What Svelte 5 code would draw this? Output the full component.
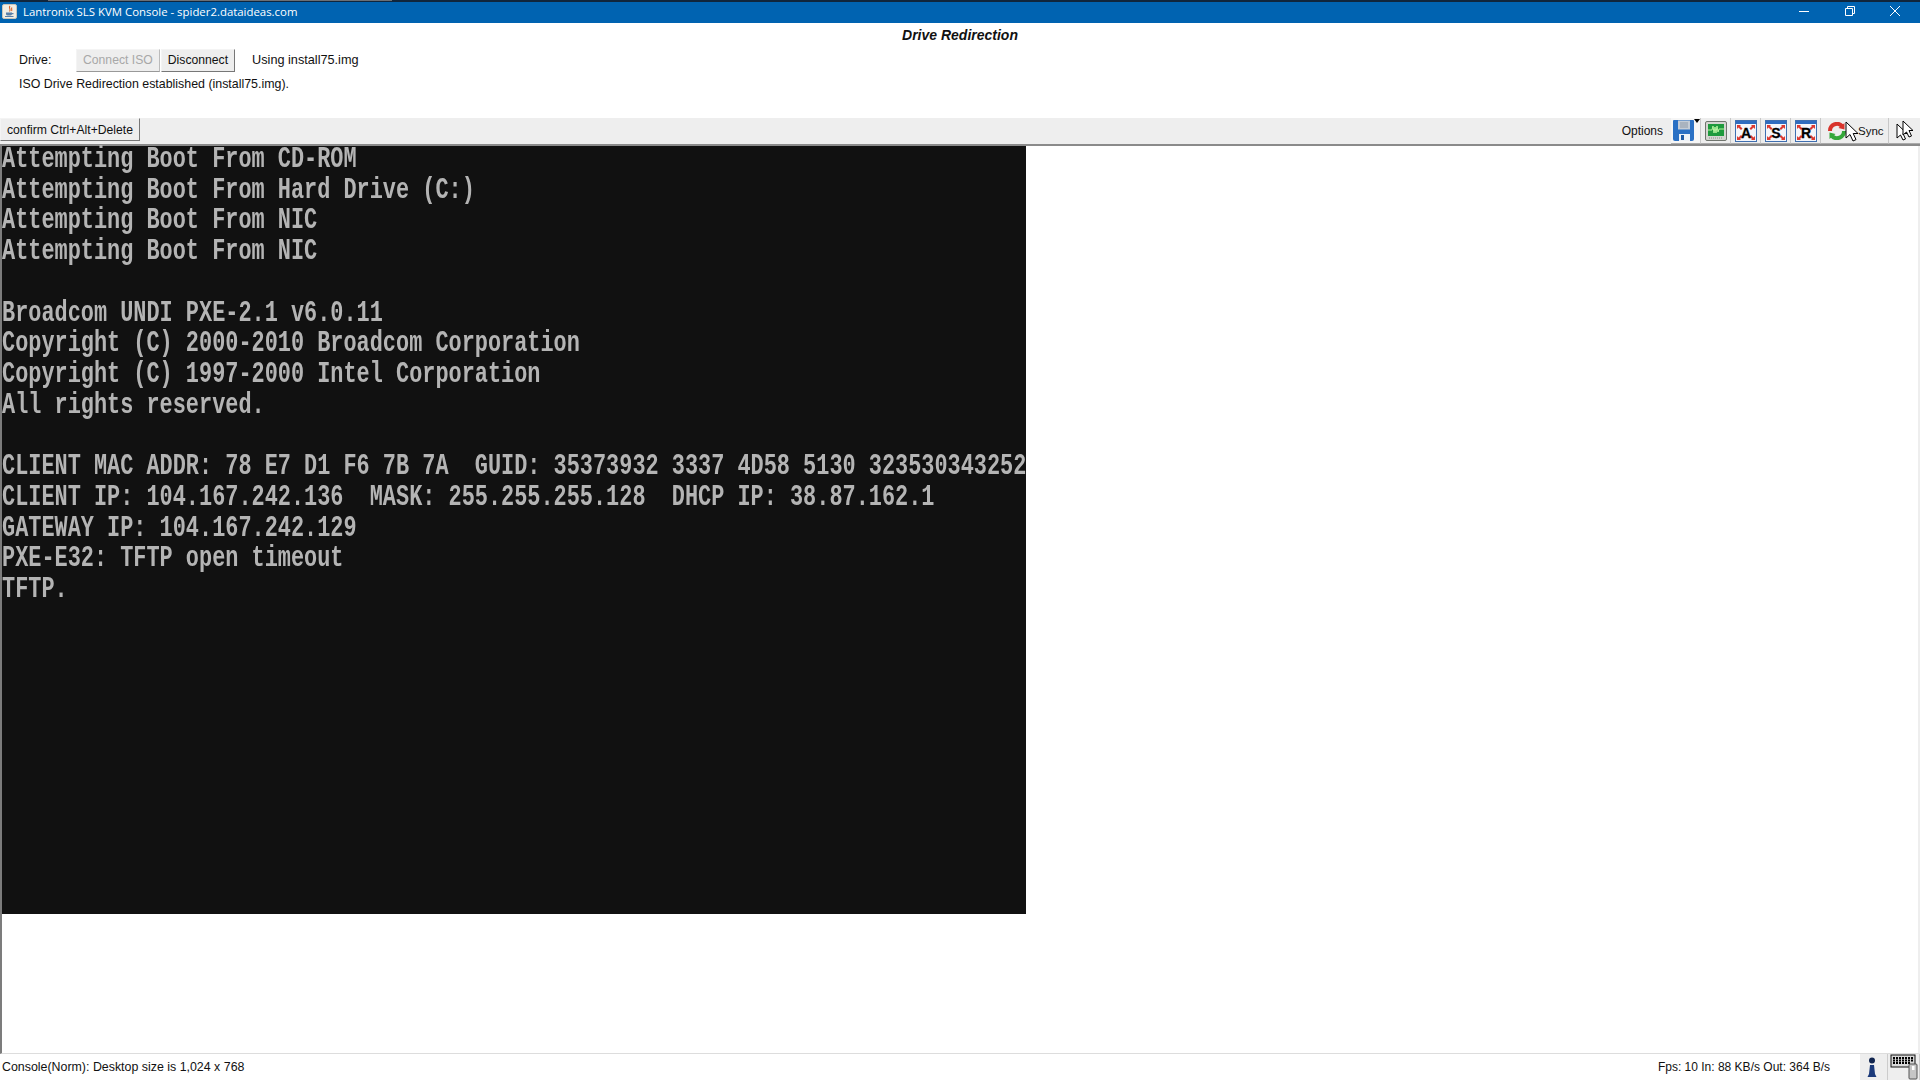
<script>
  const lines = [
    'Attempting Boot From CD-ROM',
    'Attempting Boot From Hard Drive (C:)',
    'Attempting Boot From NIC',
    'Attempting Boot From NIC',
    '',
    'Broadcom UNDI PXE-2.1 v6.0.11',
    'Copyright (C) 2000-2010 Broadcom Corporation',
    'Copyright (C) 1997-2000 Intel Corporation',
    'All rights reserved.',
    '',
    'CLIENT MAC ADDR: 78 E7 D1 F6 7B 7A  GUID: 35373932 3337 4D58 5130 323530343252',
    'CLIENT IP: 104.167.242.136  MASK: 255.255.255.128  DHCP IP: 38.87.162.1',
    'GATEWAY IP: 104.167.242.129',
    'PXE-E32: TFTP open timeout',
    'TFTP.'
  ]

  const arrows = [
    'M2 9 L2 5 L6 5 L5 6 L7.500 8.500 L6 10 L3.500 7.500 Z',
    'M20 9 L20 5 L16 5 L17 6 L14.500 8.500 L16 10 L18.500 7.500 Z',
    'M2 16 L2 20 L6 20 L5 19 L7.500 16.500 L6 15 L3.500 17.500 Z',
    'M20 16 L20 20 L16 20 L17 19 L14.500 16.500 L16 15 L18.500 17.500 Z'
  ]
  const cursor = 'M1 1 L1 17 L5 13.5 L8 20 L11 18.6 L8.2 12.5 L13 12.5 Z'
</script>

{#snippet resize(letter)}
  <svg class="ico" width="22" height="22" viewBox="0 0 22 22">
    <rect x="0.5" y="0.5" width="21" height="21" fill="#f4f6fb" stroke="#3f6fb0" />
    <rect x="1" y="1" width="20" height="3" fill="#2f6cc0" />
    {#each arrows as d}
      <path {d} fill="#dc3a32" />
    {/each}
    <text x="11" y="17.500" text-anchor="middle" class="letter">{letter}</text>
  </svg>
{/snippet}

{#snippet pointer(cls)}
  <svg class={cls} width="14" height="21" viewBox="0 0 14 21">
    <path d={cursor} fill="#fff" stroke="#000" stroke-width="1" />
  </svg>
{/snippet}

<div class="window">
  <header class="titlebar">
    <div class="title-left">
      <svg width="15" height="15" viewBox="0 0 15 15">
        <rect x="0.5" y="0.5" width="14" height="14" rx="1.5" fill="#f1ede4" stroke="#c9c4b8" />
        <path d="M8 2 C6 4 9.5 5 7.5 7.5 M10 3.5 C8.8 5 10.5 5.5 9.5 7" fill="none" stroke="#d9622a" stroke-width="1.1" />
        <path d="M4 8.5 H10 V10 C10 11 9 11.5 7 11.5 C5 11.5 4 11 4 10 Z M10 9 H11.5 V10.2 H10" fill="#5a7fa8" />
        <path d="M3 12.5 H11.5" stroke="#5a7fa8" stroke-width="1" />
      </svg>
      <span>Lantronix SLS KVM Console - spider2.dataideas.com</span>
    </div>
    <div class="winctl">
      <svg width="12" height="12" viewBox="0 0 12 12"><path d="M1 6.5 H11" stroke="#fff" /></svg>
      <svg width="12" height="12" viewBox="0 0 12 12"><path d="M1.5 3.5 H8.5 V10.5 H1.5 Z M3.5 3.5 V1.5 H10.5 V8.5 H8.5" fill="none" stroke="#fff" /></svg>
      <svg width="12" height="12" viewBox="0 0 12 12"><path d="M1 1 L11 11 M11 1 L1 11" stroke="#fff" /></svg>
    </div>
  </header>

  <section class="drive">
    <h1>Drive Redirection</h1>
    <div class="drive-row">
      <span class="drive-label">Drive:</span>
      <button class="btn" disabled>Connect ISO</button>
      <button class="btn">Disconnect</button>
      <span class="using">Using install75.img</span>
    </div>
    <p>ISO Drive Redirection established (install75.img).</p>
  </section>

  <div class="toolbar">
    <button class="btn cad">confirm Ctrl+Alt+Delete</button>
    <div class="tools">
      <span class="options">Options</span>
      <div class="tool tool-save">
        <svg class="ico" width="24" height="23" viewBox="0 0 24 23">
          <path d="M2 1 H21 Q22 1 22 2 V20 Q22 22 20 22 H3 Q1 22 1 20 V2 Q1 1 2 1 Z" fill="#2a70c4" />
          <rect x="6" y="1.500" width="12" height="9" fill="#c4ccd6" />
          <path d="M8 4 H16 M8 6 H16 M8 8 H16" stroke="#8f9aa8" />
          <rect x="7" y="15" width="11" height="7" fill="#eef2f7" />
          <rect x="9" y="16" width="3" height="5" fill="#1d5aa5" />
        </svg>
        <span class="caret"></span>
      </div>
      <div class="tool tool-std">
        <svg class="ico" width="22" height="20" viewBox="0 0 22 20">
          <rect x="0.500" y="0.500" width="21" height="19" rx="1.500" fill="#d5d5d0" stroke="#70756e" />
          <rect x="3" y="3" width="16" height="12" fill="#1f9a3c" />
          <path d="M3 9 H7 L8 5 L9 12 L10 6 L11 12 L12 5 L13 11 L14 8 H19" fill="none" stroke="#b8f5a0" />
          <path d="M4 17 H18" stroke="#8a8f88" stroke-dasharray="1 1" />
        </svg>
      </div>
      <div class="tool tool-std">{@render resize('A')}</div>
      <div class="tool tool-std">{@render resize('S')}</div>
      <div class="tool tool-std">{@render resize('R')}</div>
      <div class="tool tool-sync">
        <svg width="18" height="18" viewBox="0 0 18 18">
          <path d="M2 9 A7 7 0 0 1 14 4" fill="none" stroke="#d8342c" stroke-width="4" />
          <path d="M16.500 1 L16.500 7.500 L10.500 6 Z" fill="#d8342c" />
          <path d="M16 9 A7 7 0 0 1 4 14" fill="none" stroke="#35a83a" stroke-width="4" />
          <path d="M1.500 17 L1.500 10.500 L7.500 12 Z" fill="#35a83a" />
        </svg>
        {@render pointer('sync-pointer')}
        <span class="sync-label">Sync</span>
      </div>
      <div class="tool tool-last">
        <svg width="18" height="21" viewBox="0 0 18 21">
          <path d="M1 4 L1 18 L4.500 15 L7 20 L9.500 19 L7 13.500 L11 13.500 Z" fill="#fff" stroke="#000" />
          <path d="M7 1 L7 15 L10.500 12 L13 17 L15.500 16 L13 10.500 L17 10.500 Z" fill="#fff" stroke="#000" />
        </svg>
      </div>
    </div>
  </div>

  <main class="viewport">
    <div class="screen">
      <pre class="console">{#each lines as line}<div class="line">{line || ' '}</div>{/each}</pre>
    </div>
  </main>

  <footer class="statusbar">
    <span>Console(Norm): Desktop size is 1,024 x 768</span>
    <div class="status-right">
      <span class="stats">Fps: 10 In: 88 KB/s Out: 364 B/s</span>
      <div class="status-btn person">
        <svg width="10" height="21" viewBox="0 0 10 21">
          <circle cx="5" cy="3.500" r="3" fill="#11254f" />
          <path d="M3 8 H7 L8 17 L9.500 20 H0.500 L2 17 Z" fill="#1b3a7a" />
        </svg>
      </div>
      <div class="status-btn kbd">
        <svg width="28" height="26" viewBox="0 0 28 26">
          <rect x="1" y="1" width="24" height="12" fill="#d8d8d8" stroke="#111" />
          <path d="M3 4 H23 M3 6.500 H23 M3 9 H20" stroke="#000" stroke-dasharray="2 1" stroke-width="2" />
          <rect x="19" y="10" width="8" height="15" rx="1" fill="#c6c6c6" stroke="#555" />
          <rect x="22" y="12" width="2.500" height="4" fill="#fff" />
        </svg>
      </div>
    </div>
  </footer>
</div>

<style>
  :global(body) {
    margin: 0;
    background: #fff;
    overflow: hidden;
  }

  .window {
    display: flex;
    flex-direction: column;
    width: 1920px;
    height: 1080px;
    font-family: "Liberation Sans", Arial, sans-serif;
    font-size: 12.400px;
    color: #111;
    overflow: hidden;
  }

  .titlebar {
    position: relative;
    display: flex;
    align-items: center;
    justify-content: space-between;
    box-sizing: border-box;
    height: 23px;
    flex: none;
    background: #0063b1;
    border-top: 2px solid #10263d;
    color: #fff;
  }

  .titlebar::before {
    content: '';
    position: absolute;
    top: -2px;
    left: 48px;
    width: 344px;
    height: 1px;
    background: #6b6f75;
  }

  .title-left {
    display: flex;
    align-items: center;
    gap: 6px;
    padding-left: 2px;
    padding-bottom: 2px;
    font-family: "Open Sans", sans-serif;
    font-size: 11.400px;
  }

  .winctl {
    display: flex;
    gap: 33.500px;
    padding-right: 19px;
    padding-bottom: 3px;
    align-items: center;
  }

  .drive {
    flex: none;
    height: 95px;
    box-sizing: border-box;
    padding: 5px 19px 0;
    background: #fff;
  }

  h1 {
    margin: 0;
    font-size: 14px;
    line-height: 15px;
    font-style: italic;
    font-weight: bold;
    text-align: center;
  }

  .drive-row {
    display: flex;
    align-items: center;
    margin-top: 6px;
    height: 22px;
  }

  .drive-label {
    width: 57px;
  }

  .using {
    margin-left: 16px;
    font-size: 12.700px;
  }

  .drive p {
    margin: 4px 0 0;
    line-height: 18px;
  }

  .btn {
    box-sizing: border-box;
    height: 23px;
    padding: 0 6px;
    margin: 0 1px 0 0;
    font: 12.200px "Liberation Sans", Arial, sans-serif;
    color: #111;
    background: #eeeeee;
    border: 1px solid #f4f4f4;
    border-right-color: #777;
    border-bottom-color: #777;
  }

  .btn:disabled {
    color: #a8a8a8;
    border-right-color: #bbb;
    border-bottom-color: #999;
  }

  .toolbar {
    display: flex;
    justify-content: space-between;
    flex: none;
    box-sizing: border-box;
    height: 28px;
    background: #eeeeee;
    border-bottom: 2px solid #8a8a8a;
  }

  .cad {
    width: 140px;
    padding: 0;
  }

  .tools {
    display: flex;
    align-items: stretch;
    height: 26px;
  }

  .options {
    align-self: center;
    margin-right: 8px;
    font-size: 12px;
  }

  .tool {
    position: relative;
    display: flex;
    align-items: center;
    justify-content: center;
    box-sizing: border-box;
    border-right: 1px solid #c8c8c8;
    border-bottom: 1px solid #aaa;
  }

  .tool-save {
    width: 30px;
    padding-right: 3px;
    background: #f6f6f6;
  }

  .tool-std {
    width: 30px;
  }

  .tool-sync {
    width: 68px;
    justify-content: flex-start;
    padding-left: 7px;
  }

  .tool-last {
    width: 31px;
    border-right: 0;
  }

  .caret {
    position: absolute;
    top: 1px;
    right: 0;
    border: 3px solid transparent;
    border-top: 4px solid #000;
  }

  .sync-pointer {
    position: absolute;
    left: 24px;
    top: 3px;
  }

  .sync-label {
    margin-left: 12px;
    font-size: 11.500px;
  }

  .letter {
    font: bold 14px "Liberation Sans", Arial, sans-serif;
    fill: #000;
    stroke: #000;
    stroke-width: 0.300px;
  }

  .viewport {
    flex: 1;
    min-height: 0;
    box-sizing: border-box;
    background: #fff;
    border-left: 2px solid #7c7c7c;
    border-right: 2px solid #eeeeee;
    border-bottom: 1px solid #dddddd;
  }

  .screen {
    width: 1024px;
    height: 768px;
    background: #111111;
  }

  .console {
    margin: 0;
    width: 1404px;
    font-family: "Liberation Mono", monospace;
    font-size: 30px;
    font-weight: bold;
    line-height: 30.720px;
    color: #b4b4b4;
    transform: translateY(-2px) scaleX(0.7295);
    transform-origin: 0 0;
    filter: blur(0.500px);
  }

  .line {
    height: 30.720px;
    white-space: pre;
  }

  .statusbar {
    display: flex;
    justify-content: space-between;
    align-items: center;
    flex: none;
    height: 26px;
    padding-left: 2px;
    background: #fff;
  }

  .status-right {
    display: flex;
    align-items: center;
    height: 100%;
  }

  .stats {
    margin-right: 30px;
    font-size: 12px;
  }

  .status-btn {
    display: flex;
    align-items: center;
    justify-content: center;
    box-sizing: border-box;
    width: 28px;
    height: 100%;
    background: #eeeeee;
    border-right: 1px solid #ccc;
  }

  .status-btn.person {
    padding-right: 4px;
  }

  .status-btn.kbd {
    width: 32px;
  }
</style>
